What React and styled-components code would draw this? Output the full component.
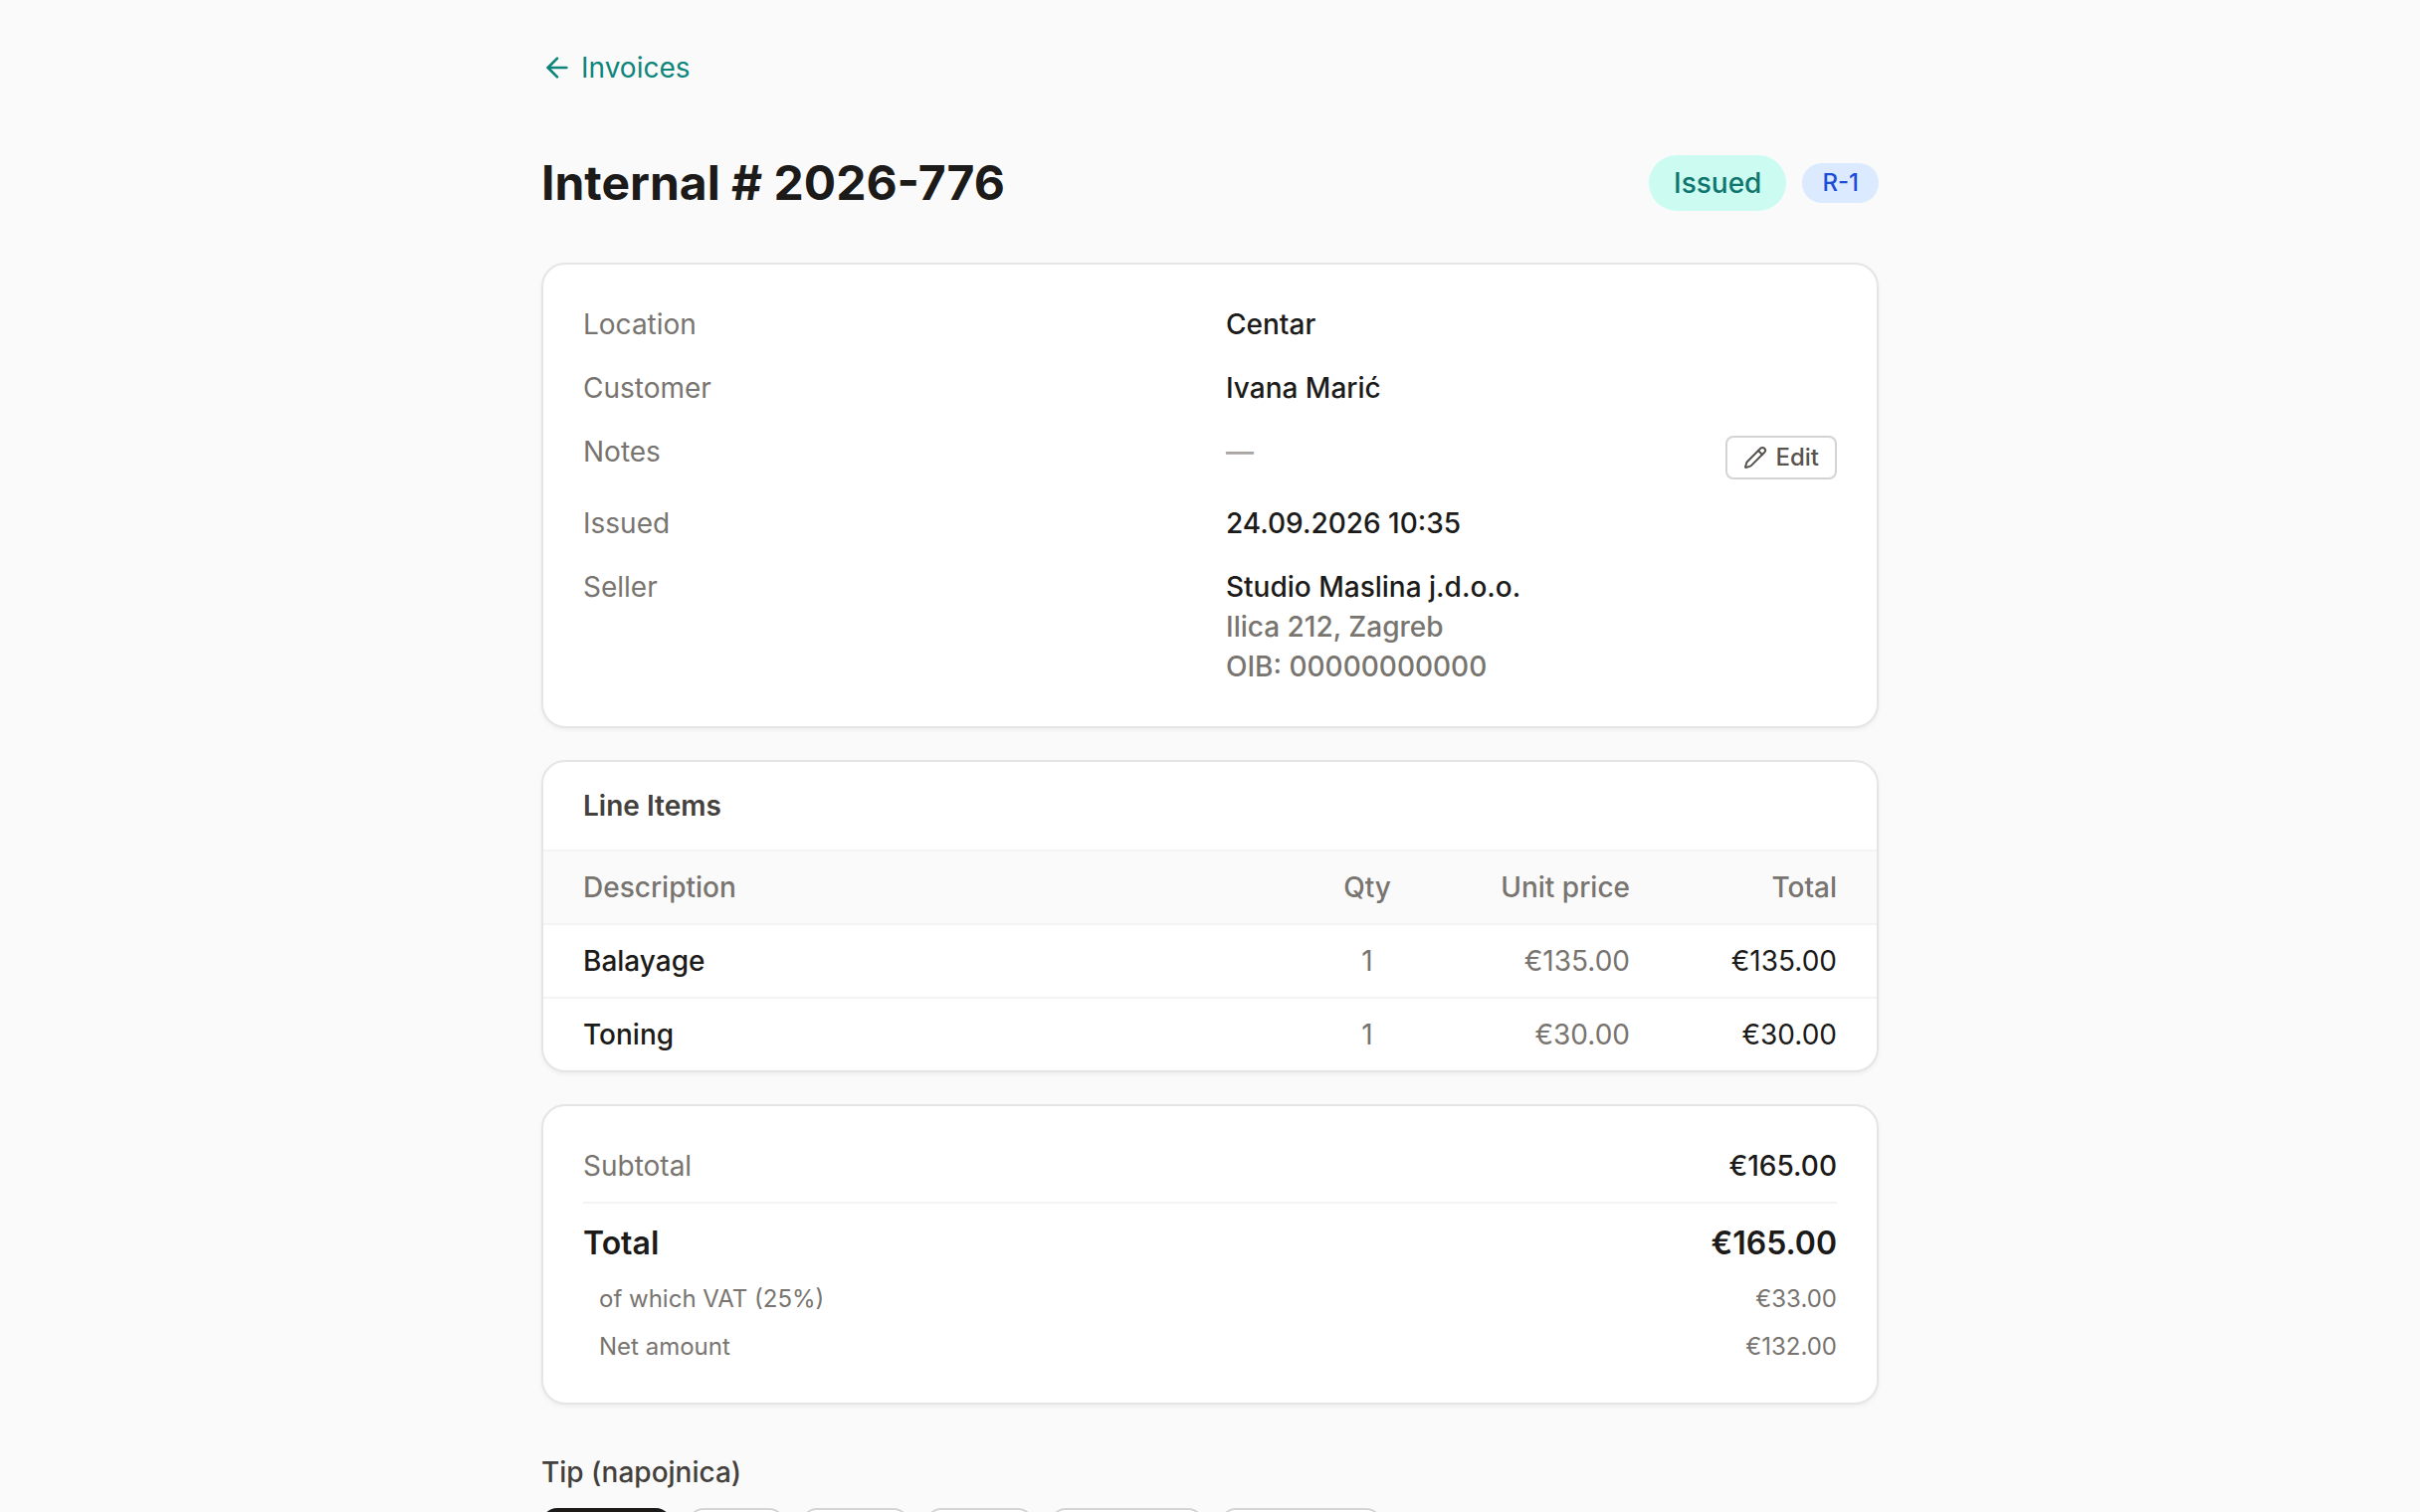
import React from "react"
import styled, { createGlobalStyle } from "styled-components"
import { ArrowLeft, Pencil } from "lucide-react"

const items = [
    { name: "Balayage", qty: 1, price: "€135.00", total: "€135.00" },
    { name: "Toning", qty: 1, price: "€30.00", total: "€30.00" },
]

const tips = ["No tip", "5%", "10%", "15%", "Custom", "Set total"]

export default function App() {
    const [tip, setTip] = React.useState("No tip")

    return (
        <Page>
            <GlobalStyle />
            <BackLink href="#invoices">
                <ArrowLeft size={32} />
                Invoices
            </BackLink>

            <Header>
                <h1>Internal # 2026-776</h1>
                <Badges>
                    <StatusBadge>Issued</StatusBadge>
                    <TypeBadge>R-1</TypeBadge>
                </Badges>
            </Header>

            <Card>
                <Details>
                    <dt>Location</dt>
                    <dd>Centar</dd>
                    <dt>Customer</dt>
                    <dd>Ivana Marić</dd>
                    <dt>Notes</dt>
                    <NotesValue>
                        <span>—</span>
                        <EditButton type="button">
                            <Pencil size={24} />
                            Edit
                        </EditButton>
                    </NotesValue>
                    <dt>Issued</dt>
                    <dd>24.09.2026 10:35</dd>
                    <dt>Seller</dt>
                    <dd>
                        Studio Maslina j.d.o.o.
                        <Muted>Ilica 212, Zagreb</Muted>
                        <Muted>OIB: 00000000000</Muted>
                    </dd>
                </Details>
            </Card>

            <Card>
                <CardTitle>Line Items</CardTitle>
                <Table>
                    <thead>
                        <tr>
                            <Th>Description</Th>
                            <Th $align="center" $width="128px">Qty</Th>
                            <Th $align="right" $width="224px">Unit price</Th>
                            <Th $align="right" $width="224px">Total</Th>
                        </tr>
                    </thead>
                    <tbody>
                        {items.map((item) => (
                            <tr key={item.name}>
                                <Td $dark $weight={500}>{item.name}</Td>
                                <Td $align="center">{item.qty}</Td>
                                <Td $align="right">{item.price}</Td>
                                <Td $align="right" $dark>{item.total}</Td>
                            </tr>
                        ))}
                    </tbody>
                </Table>
            </Card>

            <Card>
                <Totals>
                    <SumRow>
                        <span>Subtotal</span>
                        <strong>€165.00</strong>
                    </SumRow>
                    <TotalRow>
                        <span>Total</span>
                        <span>€165.00</span>
                    </TotalRow>
                    <TaxRow>
                        <span>of which VAT (25%)</span>
                        <span>€33.00</span>
                    </TaxRow>
                    <TaxRow>
                        <span>Net amount</span>
                        <span>€132.00</span>
                    </TaxRow>
                </Totals>
            </Card>

            <TipSection>
                <h2>Tip (napojnica)</h2>
                <TipOptions>
                    {tips.map((label) => (
                        <TipButton
                            key={label}
                            type="button"
                            $active={label === tip}
                            onClick={() => setTip(label)}
                        >
                            {label}
                        </TipButton>
                    ))}
                </TipOptions>
            </TipSection>
        </Page>
    )
}

const GlobalStyle = createGlobalStyle`
    * {
        box-sizing: border-box;
        margin: 0;
        padding: 0;
    }

    body {
        background: #FAFAFA;
        color: #1C1B1A;
        font-family: Inter, "Liberation Sans", sans-serif;
        font-size: 28px;
        line-height: 40px;
    }

    button {
        font-family: inherit;
        cursor: pointer;
    }
`

const Page = styled.main`
    display: flex;
    flex-direction: column;
    gap: 32px;
    width: 100%;
    max-width: 1408px;
    margin: 0 auto;
    padding: 48px 32px;
`

const BackLink = styled.a`
    display: flex;
    align-items: center;
    align-self: flex-start;
    gap: 8px;
    margin-bottom: 32px;
    color: #0D857B;
    text-decoration: none;
`

const Header = styled.header`
    display: flex;
    align-items: center;
    justify-content: space-between;
    margin-bottom: 16px;

    h1 {
        font-weight: 700;
        font-size: 48px;
        line-height: 64px;
    }
`

const Badges = styled.div`
    display: flex;
    align-items: center;
    gap: 16px;
`

const StatusBadge = styled.span`
    padding: 8px 25px;
    border-radius: 28px;
    font-weight: 500;
    color: #0F766E;
    background: #CCFBF1;
`

const TypeBadge = styled.span`
    padding: 4px 20px;
    border-radius: 20px;
    font-weight: 500;
    font-size: 24px;
    line-height: 32px;
    color: #1D4ED8;
    background: #DBEAFE;
`

const Card = styled.section`
    border: 2px solid #E5E5E4;
    border-radius: 24px;
    box-shadow: 0 2px 4px rgba(0, 0, 0, 0.05);
    background: #FFFFFF;
    overflow: hidden;
`

const Details = styled.dl`
    display: grid;
    grid-template-columns: 1fr 1fr;
    gap: 24px 32px;
    padding: 40px;

    dt {
        color: #787470;
    }

    dd {
        font-weight: 500;
    }
`

const NotesValue = styled.dd`
    display: flex;
    align-items: flex-start;
    justify-content: space-between;

    span {
        color: #A8A5A2;
    }
`

const EditButton = styled.button`
    display: flex;
    align-items: center;
    gap: 8px;
    margin-top: 4px;
    padding: 4px 16px;
    border: 2px solid #D6D4D2;
    border-radius: 8px;
    font-weight: 500;
    font-size: 24px;
    line-height: 32px;
    color: #57534E;
    background: #FFFFFF;
`

const Muted = styled.div`
    color: #787470;
`

const CardTitle = styled.h2`
    padding: 24px 40px;
    border-bottom: 2px solid #F3F3F2;
    font-weight: 600;
    font-size: 28px;
    line-height: 40px;
    color: #44403C;
`

const Table = styled.table`
    width: 100%;
    border-spacing: 0;

    tr > :first-child {
        padding-left: 40px;
    }

    tr > :last-child {
        padding-right: 40px;
    }
`

const Th = styled.th`
    width: ${(props) => props.$width || "auto"};
    padding: 16px 24px;
    text-align: ${(props) => props.$align || "left"};
    font-weight: 500;
    color: #787470;
    background: #FAFAFA;
`

const Td = styled.td`
    padding: 16px 24px;
    border-top: 2px solid #F3F3F2;
    text-align: ${(props) => props.$align || "left"};
    font-weight: ${(props) => props.$weight || 400};
    color: ${(props) => (props.$dark ? "#1C1B1A" : "#787470")};
`

const Totals = styled.div`
    display: flex;
    flex-direction: column;
    gap: 16px;
    padding: 40px;
`

const SumRow = styled.div`
    display: flex;
    justify-content: space-between;
    color: #787470;

    strong {
        font-weight: 500;
        color: #1C1B1A;
    }
`

const TotalRow = styled.div`
    display: flex;
    justify-content: space-between;
    padding-top: 16px;
    border-top: 2px solid #F3F3F2;
    font-weight: 600;
    font-size: 32px;
    line-height: 48px;
`

const TaxRow = styled.div`
    display: flex;
    justify-content: space-between;
    padding-left: 16px;
    font-size: 24px;
    line-height: 32px;
    color: #787470;
`

const TipSection = styled.section`
    display: flex;
    flex-direction: column;
    gap: 16px;
    padding-top: 16px;

    h2 {
        font-weight: 500;
        font-size: 28px;
        line-height: 40px;
        color: #44403C;
    }
`

const TipOptions = styled.div`
    display: flex;
    flex-wrap: wrap;
    gap: 16px;
`

const TipButton = styled.button`
    padding: 12px 24px;
    border: 2px solid ${(props) => (props.$active ? "#1C1B1A" : "#D6D4D2")};
    border-radius: 16px;
    font-weight: 500;
    font-size: 28px;
    line-height: 40px;
    color: ${(props) => (props.$active ? "#FFFFFF" : "#44403C")};
    background: ${(props) => (props.$active ? "#1C1B1A" : "#FFFFFF")};
`
